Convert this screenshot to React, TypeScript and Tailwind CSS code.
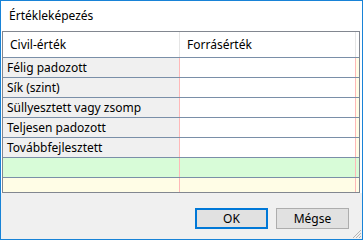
import React from 'react';

const rows = ['Félig padozott', 'Sík (szint)', 'Süllyesztett vagy zsomp', 'Teljesen padozott', 'Továbbfejlesztett'];

// small dotted grip in the lower right corner
const Grip = () => (
  <svg width="12" height="12" viewBox="0 0 12 12" className="absolute right-0 bottom-0">
    <path d="M11 3L3 11M11 6L6 11M11 9L9 11" stroke="#b4b4b4" strokeWidth={1} />
  </svg>
);

export default function App() {
  return (
    <div
      className="relative w-[363px] h-[240px] border border-[#1883d7] bg-[#f0f0f0] flex flex-col text-[12px] text-black overflow-hidden"
      style={{ fontFamily: '"Noto Sans", "Open Sans", sans-serif' }}
    >
      {/* Title */}
      <div className="bg-white h-[30px] pl-2 flex items-center leading-none">Értékleképezés</div>

      {/* Grid */}
      <div className="bg-white pl-[1px] pr-[2px]">
        <div className="w-[358px] h-[162px] border border-[#828790] bg-[#fffde6] flex flex-col">
          <div className="flex h-[26px] bg-white border-b border-[#7a8fa8] shrink-0">
            <div className="w-[177px] pl-[7px] flex items-center border-r border-[#e5e5e5]">Civil-érték</div>
            <div className="w-[176px] pl-[7px] flex items-center border-r border-[#e5e5e5]">Forrásérték</div>
            <div className="flex-1" />
          </div>
          {rows.map((r) => (
            <div key={r} className="flex h-[20px] border-b border-[#7a8fa8] shrink-0">
              <div className="w-[177px] pl-[4px] flex items-center bg-[#f0f0f0] border-r border-[#ffb8b8]">{r}</div>
              <div className="w-[176px] bg-white border-r border-[#ffb8b8]" />
              <div className="flex-1 bg-[#fffde6]" />
            </div>
          ))}
          <div className="flex h-[20px] border-b border-[#7a8fa8] bg-[#d8fcd8] shrink-0">
            <div className="w-[177px] border-r border-[#ffb8b8]" />
            <div className="w-[176px] border-r border-[#ffb8b8]" />
          </div>
          <div className="flex flex-1">
            <div className="w-[177px] border-r border-[#ffb8b8]" />
            <div className="w-[176px] border-r border-[#ffb8b8]" />
          </div>
        </div>
      </div>

      {/* Buttons */}
      <div className="flex justify-end gap-2 pt-[15px] pr-[13px]">
        <button className="w-[73px] h-[21px] bg-[#e1e1e1] border-2 border-[#0078d7] flex items-center justify-center leading-none">
          OK
        </button>
        <button className="w-[73px] h-[21px] bg-[#e1e1e1] border border-[#adadad] flex items-center justify-center leading-none">
          Mégse
        </button>
      </div>
      <Grip />
    </div>
  );
}
